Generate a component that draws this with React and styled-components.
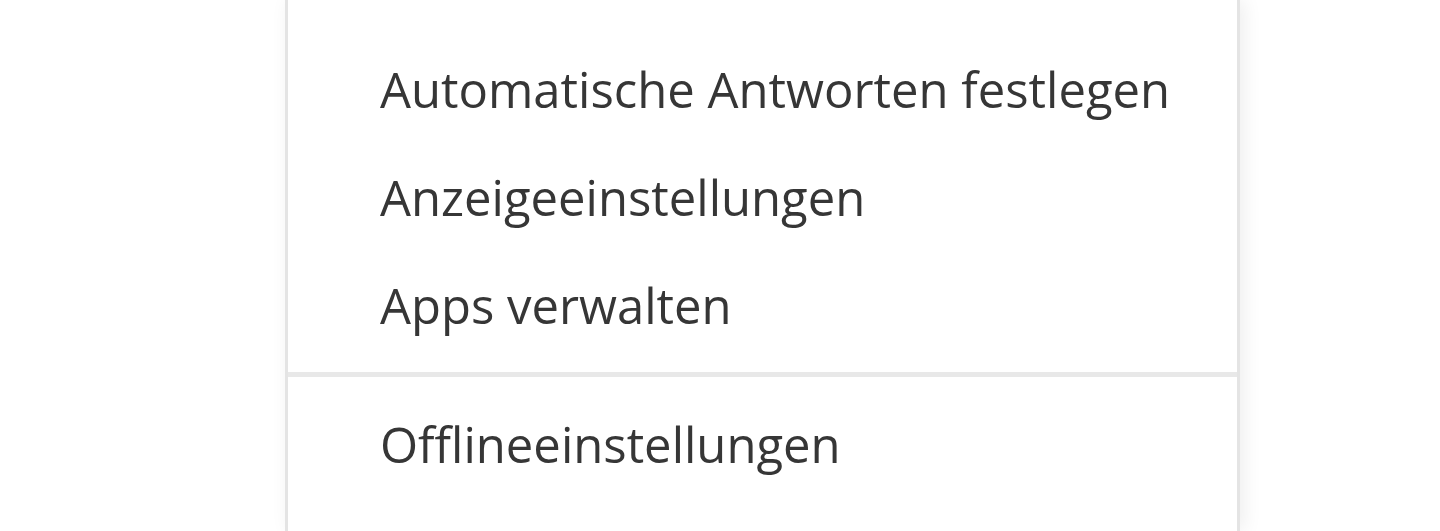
import styled, { createGlobalStyle } from "styled-components";

const GlobalStyle = createGlobalStyle`
  html, body {
    margin: 0;
    padding: 0;
    background: #ffffff;
    height: 531px;
    overflow: hidden;
  }
`

const Page = styled.div`
  display: flex;
  height: 531px;
  padding-left: 285px;
  box-sizing: border-box;
  overflow: hidden;
`

const Panel = styled.div`
  width: 955px;
  height: 100%;
  box-sizing: border-box;
  background: #ffffff;
  border-left: 3px solid #e4e4e4;
  border-right: 3px solid #e4e4e4;
  box-shadow: 4px 0 18px rgba(0, 0, 0, 0.07);
  padding-top: 35px;
  display: flex;
  flex-direction: column;
  overflow: hidden;
`

const Item = styled.div`
  flex: none;
  height: 108px;
  line-height: 108px;
  padding-left: 92px;
  font-family: "Open Sans", "Noto Sans", sans-serif;
  font-size: 49px;
  color: #363636;
  white-space: nowrap;
`

const Divider = styled.div`
  flex: none;
  height: 5px;
  margin: 13px 0;
  background: #e8e8e8;
`

const items = [
  "Automatische Antworten festlegen",
  "Anzeigeeinstellungen",
  "Apps verwalten",
]

const App = () => {
  return (
    <>
      <GlobalStyle />
      <Page>
        <Panel>
          {items.map((label) => (
            <Item key={label}>{label}</Item>
          ))}
          <Divider />
          <Item>Offlineeinstellungen</Item>
        </Panel>
      </Page>
    </>
  );
}

export default App;
